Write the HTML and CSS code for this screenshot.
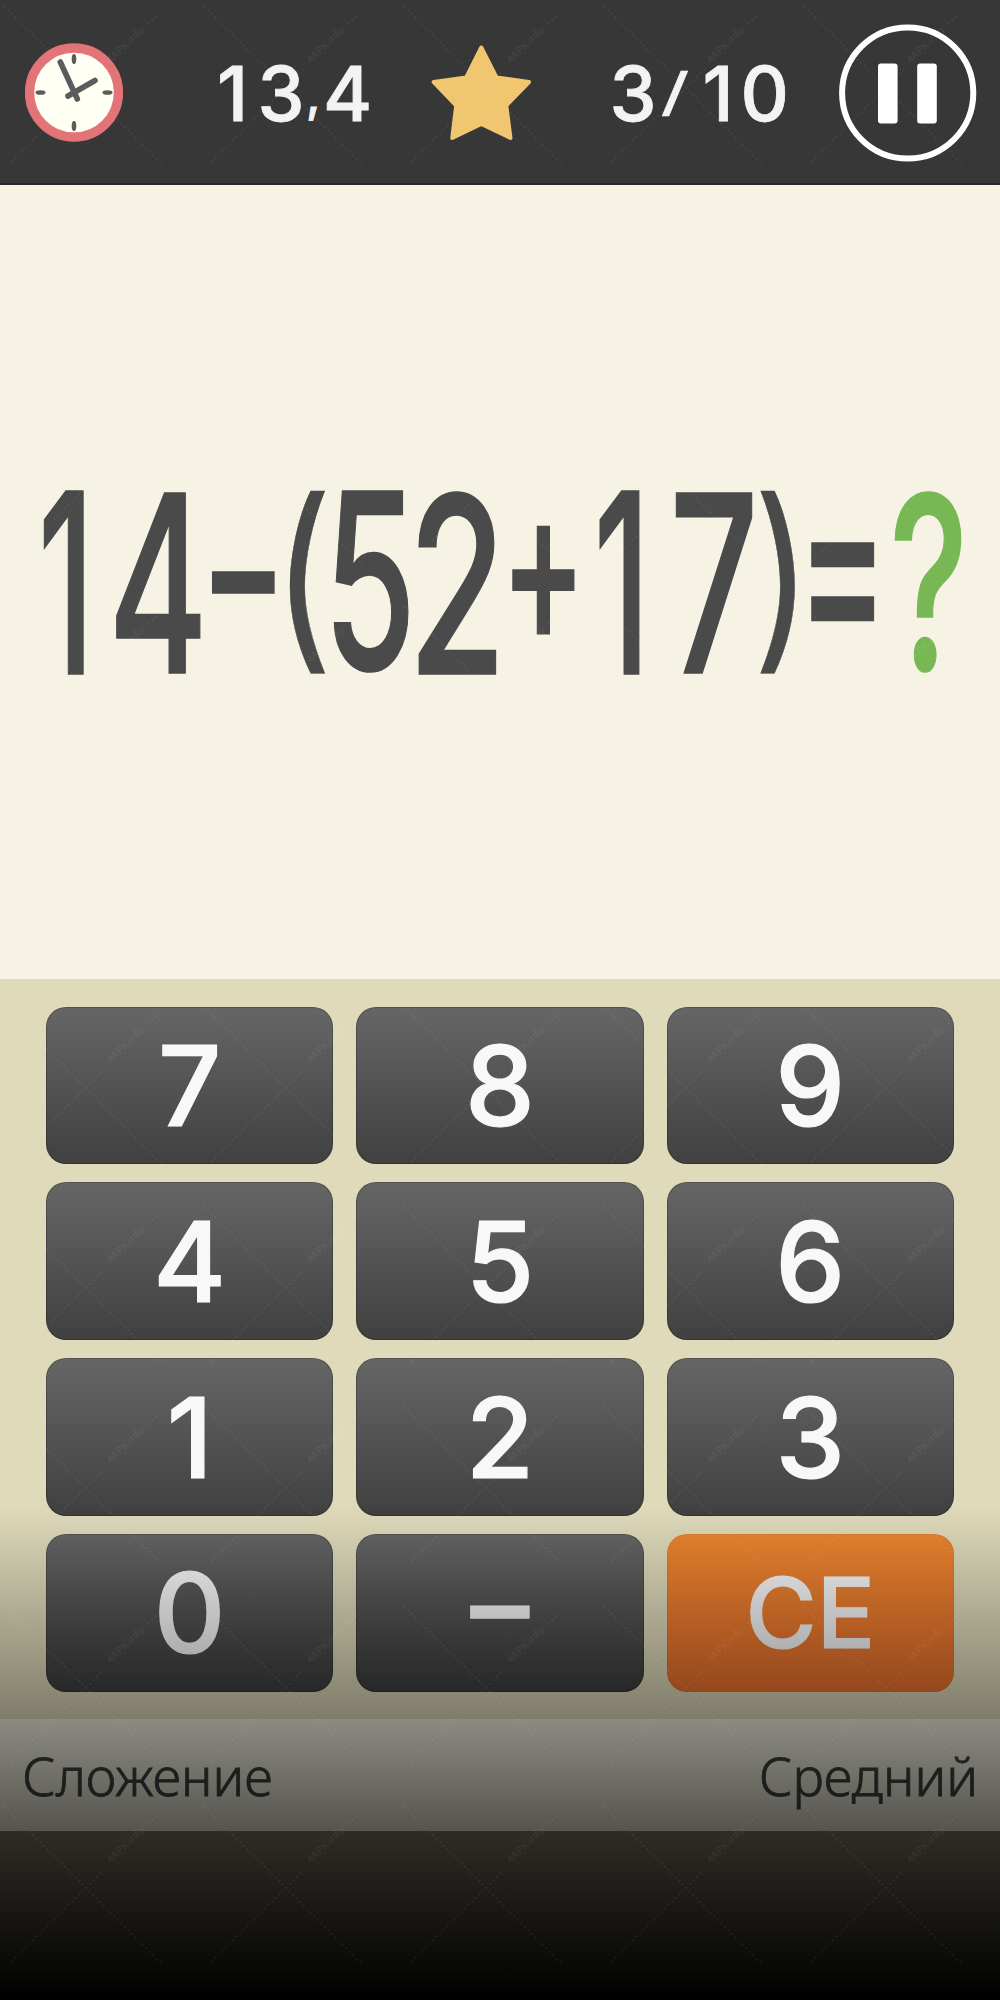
FILE: index.html
```html
<!DOCTYPE html>
<html lang="ru">
<head>
  <meta charset="UTF-8" />
  <meta name="viewport" content="width=device-width, initial-scale=1.0"/>
  <title>Сложение - Средний</title>
  <link rel="stylesheet" href="styles.css">
</head>
<body>
  <div class="game">

    <header class="topbar">
      <svg class="clock" viewBox="25 43 98 99">
        <circle cx="74" cy="92.5" r="44.5" fill="#fffff3" stroke="#e27478" stroke-width="9.4"/>
        <g fill="#5b5b5b">
          <ellipse cx="74" cy="59" rx="2.3" ry="5"/>
          <ellipse cx="74" cy="126" rx="2.3" ry="5"/>
          <ellipse cx="40.5" cy="92.5" rx="5" ry="2.3"/>
          <ellipse cx="107.5" cy="92.5" rx="5" ry="2.3"/>
        </g>
        <path d="M60.3 62 77.3 99M68 96 95 80.5" stroke="#5b5b5b" stroke-width="5.6" stroke-linecap="round" fill="none"/>
      </svg>

      <svg class="time" viewBox="210 0 170 184">
        <text class="num"><tspan x="217" y="120">1</tspan><tspan x="257.5" y="120">3</tspan><tspan class="comma" x="306" y="111">,</tspan><tspan x="323" y="120">4</tspan></text>
      </svg>

      <svg class="star" viewBox="430 43 104 100">
        <path d="M481.3 47.5 496.5 77.5 529 82 506.3 105.5 510.5 138 481.3 124 452.2 138 456.2 105.5 433.7 82 466.2 77.5Z" fill="#f0c671" stroke="#f0c671" stroke-width="4" stroke-linejoin="round"/>
      </svg>

      <svg class="count" viewBox="600 0 190 184">
        <text class="num"><tspan x="609.5" y="120">3</tspan></text>
        <text class="num slash" transform="translate(660.5 109.4) scale(1.07 .69)">/</text>
        <text class="num"><tspan x="702.5" y="120">1</tspan><tspan x="740.5" y="120">0</tspan></text>
      </svg>

      <svg class="pause" viewBox="838 22 140 140">
        <circle cx="907.7" cy="92" r="65.6" fill="none" stroke="#fff" stroke-width="6"/>
        <rect x="878" y="62.5" width="19.6" height="60" rx="3" fill="#fff"/>
        <rect x="917.2" y="62.5" width="19.6" height="60" rx="3" fill="#fff"/>
      </svg>
    </header>

    <main class="task">
      <!-- every sign is stretched separately to fill the full width -->
      <svg class="equation" viewBox="0 480 1000 204">
        <g class="sign">
          <text transform="translate(38 674) scale(1.35 2.52)">1</text>
          <text transform="translate(108.2 672.5) scale(1.52 2.48)">4</text>
          <text transform="translate(199.5 643.7) scale(1.31 2.15)">−</text>
          <text class="paren" transform="translate(272.5 646) scale(1.645 2.007)">(</text>
          <text transform="translate(323.6 670.3) scale(1.5 2.467)">5</text>
          <text transform="translate(408 674) scale(1.59 2.467)">2</text>
          <text transform="translate(501 644) scale(1.27 2.22)">+</text>
          <text transform="translate(593.7 674) scale(1.35 2.52)">1</text>
          <text transform="translate(669.6 672.5) scale(1.56 2.48)">7</text>
          <text class="paren" transform="translate(753.3 646) scale(1.6 2.007)">)</text>
          <text transform="translate(797.4 652) scale(1.355 2.454)">=</text>
          <text class="answer" transform="translate(889.2 670.3) scale(1.494 2.42)">?</text>
        </g>
      </svg>
    </main>

    <section class="keypad">
      <button class="key">7</button>
      <button class="key">8</button>
      <button class="key">9</button>
      <button class="key">4</button>
      <button class="key">5</button>
      <button class="key">6</button>
      <button class="key">1</button>
      <button class="key">2</button>
      <button class="key">3</button>
      <button class="key">0</button>
      <button class="key minus">−</button>
      <button class="key clear">CE</button>
    </section>

    <footer class="info">
      <span>Сложение</span>
      <span>Средний</span>
    </footer>

    <div class="shade"></div>

    <svg class="marks" width="1000" height="2000">
      <defs>
        <pattern id="mark" width="200" height="200" patternUnits="userSpaceOnUse">
          <g fill="none" stroke="#fff" stroke-width="1.5" stroke-dasharray="2 3">
            <path d="M4 6 162 164"/>
            <path d="M11 162 105 69"/>
            <path d="M148 24 160 13"/>
          </g>
          <text transform="translate(110.5 63.5) rotate(-43)">4APK.info</text>
        </pattern>
      </defs>
      <rect width="1000" height="2000" fill="url(#mark)"/>
    </svg>
  </div>
</body>
</html>
```
FILE: styles.css
```css
* {
  box-sizing: border-box;
}

body {
  margin: 0;
  font-family: Inter, "Liberation Sans", sans-serif;
  background: #000;
}

.game {
  position: relative;
  width: 1000px;
  height: 2000px;
  overflow: hidden;
  background: #88826f;
}

/* top bar */
.topbar {
  display: flex;
  align-items: center;
  height: 185px;
  padding: 2px 0 0 25px;
  background: #373737;
  border-bottom: 2px solid #292728;
}

.topbar svg {
  flex: none;
}

.clock {
  width: 98px;
  height: 99px;
}

.time {
  width: 170px;
  height: 184px;
  margin-left: 87px;
}

.star {
  width: 104px;
  height: 100px;
  margin-left: 50px;
}

.count {
  width: 190px;
  height: 184px;
  margin-left: 66px;
}

.pause {
  width: 140px;
  height: 140px;
  margin-left: 48px;
}

.num {
  font-size: 75px;
  font-weight: 500;
  fill: #f3f3f3;
  stroke: #f3f3f3;
  stroke-width: 0.8px;
}

.comma {
  font-size: 48px;
}

.slash {
  font-weight: 400;
}

/* equation */
.task {
  display: flex;
  align-items: center;
  height: 794px;
  background: #f6f3e5;
}

.equation {
  width: 1000px;
  height: 204px;
  overflow: visible;
}

.sign {
  font-size: 100px;
  font-weight: 500;
  fill: #4a4a4a;
  stroke: #4a4a4a;
  stroke-width: 1.4px;
}

.sign text {
  vector-effect: non-scaling-stroke;
}

.sign .paren {
  font-weight: 400;
  stroke-width: 0.5px;
}

.sign .answer {
  fill: #77b855;
  stroke: #77b855;
}

/* keypad */
.keypad {
  display: grid;
  grid-template-columns: repeat(3, 1fr);
  grid-template-rows: repeat(4, 157.5px);
  gap: 18.4px 23px;
  height: 740px;
  padding: 27.5px 46px 0;
  background: #dfdaba;
}

.key {
  display: flex;
  align-items: center;
  justify-content: center;
  padding: 0;
  border: 1px solid rgba(0, 0, 0, 0.2);
  border-radius: 20px;
  background: linear-gradient(#666, #404040) border-box;
  color: #f8f8f8;
  font-family: inherit;
  font-size: 111px;
  font-weight: 500;
  line-height: 1;
  -webkit-text-stroke: 1.2px #f8f8f8;
}

.minus {
  font-size: 124px;
  padding-bottom: 19px;
}

.clear {
  border-color: rgba(0, 0, 0, 0.05);
  background: linear-gradient(#ec862f, #ee732e) border-box;
  font-size: 97px;
}

/* mode and level */
.info {
  display: flex;
  align-items: center;
  justify-content: space-between;
  height: 112px;
  padding: 1px 22px 0;
  background: #f7f5e6;
  color: #424242;
  font-family: "Noto Sans", sans-serif;
  font-size: 53px;
  font-weight: 300;
  line-height: 1;
  -webkit-text-stroke: 0.8px #424242;
}

/* overlays */
.shade {
  position: absolute;
  left: 0;
  right: 0;
  bottom: 0;
  height: 495px;
  background: linear-gradient(transparent, #000);
}

.marks {
  position: absolute;
  left: 0;
  top: 0;
  opacity: 0.07;
}

.marks text {
  font-family: "Noto Sans", sans-serif;
  font-size: 10.5px;
  fill: #fff;
}
```
